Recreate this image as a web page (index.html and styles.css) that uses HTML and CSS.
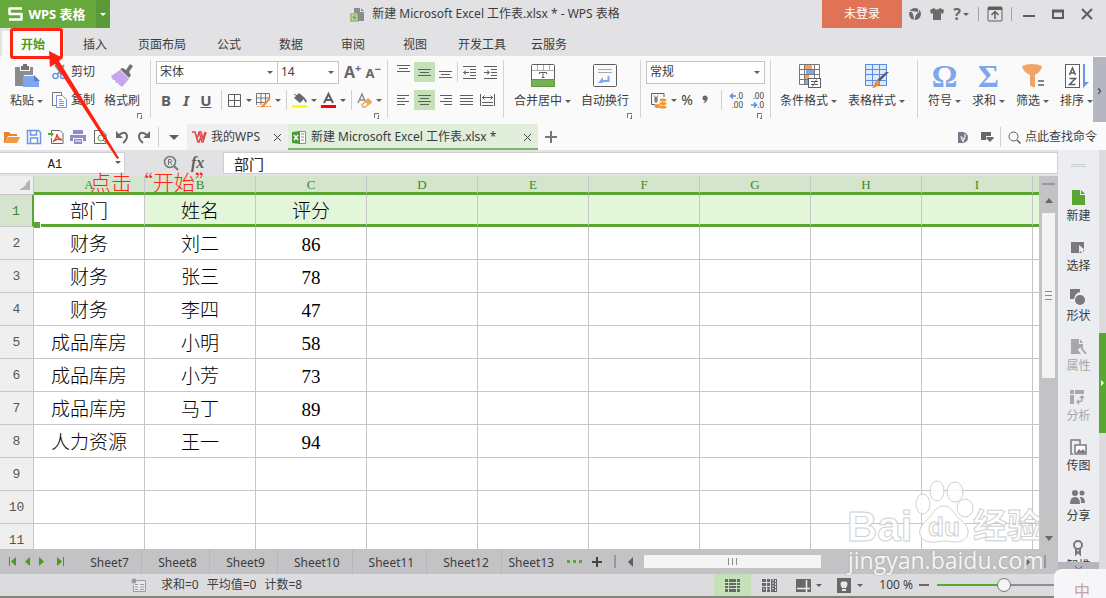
FILE: index.html
```html
<!DOCTYPE html>
<html lang="zh-CN">
<head>
    <meta charset="UTF-8">
    <meta name="viewport" content="width=device-width, initial-scale=1.0">
    <title>新建 Microsoft Excel 工作表.xlsx * - WPS 表格</title>
    <link rel="stylesheet" href="styles.css">
</head>
<body>
    <header class="titlebar">
        <button class="brand">
            <svg width="15" height="14" viewBox="0 0 15 14"><path d="M14 1.500H1.500V7H13.500V12.500H1" fill="none" stroke="#fff" stroke-width="2.500" stroke-linejoin="round"/></svg>
            WPS 表格
        </button>
        <button class="brand-menu" aria-label="菜单"><span class="caret"></span></button>
        <div class="title">
            <svg width="15" height="15" viewBox="0 0 15 15"><path d="M4 1h6v4h4v9H8V6H4z" fill="#8c8c8e"/><path d="M11 1l3 3h-3z" fill="#8c8c8e"/><rect x="1" y="7" width="7" height="7" fill="#e2e2e4" stroke="#5aa632"/><path d="M6.500 9H3v1.500h3V12H2.500" fill="none" stroke="#5aa632"/></svg>
            <span>新建 Microsoft Excel 工作表.xlsx * - WPS 表格</span>
        </div>
        <button class="login">未登录</button>
        <div class="window-tools">
            <button aria-label="云"><svg width="14" height="14" viewBox="0 0 14 14"><circle cx="7" cy="7" r="6" fill="#6b6b6d"/><path d="M4 4l6 1-4 6z" fill="#e2e2e4"/><path d="M1 4l4 1M11 2l-1 4M6 13l1-4" stroke="#e2e2e4"/></svg></button>
            <button aria-label="皮肤"><svg width="14" height="14" viewBox="0 0 14 14"><path d="M4 1Q7 4 10 1l4 2-1 4-2-1v7H3V6L1 7 0 3z" fill="#6b6b6d"/></svg></button>
            <button class="help" aria-label="帮助">?<span class="caret"></span></button>
            <i class="bar"></i>
            <button aria-label="隐藏功能区"><svg width="16" height="16" viewBox="0 0 16 16"><rect x="1" y="1" width="14" height="14" rx="1" fill="none" stroke="#5e5e60"/><path d="M1 2.500h14" stroke="#5e5e60" stroke-width="3"/><path d="M8 13V6M4.500 9L8 5.500 11.500 9" fill="none" stroke="#5e5e60" stroke-width="1.500"/></svg></button>
            <i class="bar"></i>
            <button class="win" aria-label="最小化"><svg width="12" height="12" viewBox="0 0 12 12"><path d="M0 8h12" stroke="#5e5e60" stroke-width="2"/></svg></button>
            <button class="win" aria-label="最大化"><svg width="12" height="12" viewBox="0 0 12 12"><path d="M1 3v7h10V3z" fill="none" stroke="#5e5e60" stroke-width="2"/><path d="M0 3h12" stroke="#5e5e60" stroke-width="3"/></svg></button>
            <button class="win" aria-label="关闭"><svg width="12" height="12" viewBox="0 0 12 12"><path d="M1 1l10 10M11 1L1 11" stroke="#5e5e60" stroke-width="2"/></svg></button>
        </div>
    </header>

    <nav class="menu">
        <a href="#" class="active">开始</a>
        <a href="#">插入</a>
        <a href="#">页面布局</a>
        <a href="#">公式</a>
        <a href="#">数据</a>
        <a href="#">审阅</a>
        <a href="#">视图</a>
        <a href="#">开发工具</a>
        <a href="#">云服务</a>
    </nav>

    <section class="ribbon">
        <div class="group clipboard">
            <button class="big">
                <svg width="26" height="26" viewBox="0 0 26 26"><path d="M1 4h5v4h10V4h3v8h-9v11H1z" fill="#8c8c8e"/><path d="M7 3h2V1h4v2h2v4H7z" fill="#737375"/><path d="M9 13h11l5 5v6H9z" fill="#7fa5ee"/><path d="M20 12v6h6z" fill="#4f7fd8"/></svg>
                <span>粘贴<i class="caret"></i></span>
            </button>
            <div class="pair">
                <button><svg width="15" height="16" viewBox="0 0 15 16"><path d="M3 1l7 10M12 1L6 10" stroke="#8c8c8e" stroke-width="2"/><circle cx="3.500" cy="12" r="2.500" fill="none" stroke="#6d95e3" stroke-width="1.500"/><circle cx="11" cy="12" r="2.500" fill="none" stroke="#6d95e3" stroke-width="1.500"/></svg>剪切</button>
                <button><svg width="15" height="16" viewBox="0 0 15 16"><path d="M4 13.500H.5v-13h9V3" fill="none" stroke="#77777a"/><path d="M4.500 3.500h6l4 4v8h-10z" fill="#fff" stroke="#6d95e3"/><path d="M7 7.500h3M7 9.500h5M7 11.500h5M7 13.500h5" stroke="#6d95e3"/></svg>复制</button>
            </div>
            <button class="big">
                <svg width="26" height="26" viewBox="0 0 26 26"><path d="M2 13l9-6 9 9-7 8q-2-2-3-2l-1-2-2 0-1-3-2 0z" fill="#c9a4f2"/><path d="M11 6l3-1 3 2 4-6 3 2-4 6 2 3-2 3z" fill="#737375"/></svg>
                <span>格式刷</span>
            </button>
            <button class="launcher" aria-label="剪贴板"></button>
        </div>

        <div class="group font">
            <div class="row">
                <label class="pick family"><select aria-label="字体"><option>宋体</option></select></label>
                <label class="pick size"><select aria-label="字号"><option>14</option></select></label>
                <button class="grow">A<sup>+</sup></button>
                <button class="shrink">A<sup>−</sup></button>
            </div>
            <div class="row tools">
                <button class="letter"><b>B</b></button>
                <button class="letter"><b><em>I</em></b></button>
                <button class="letter"><b><u>U</u></b></button>
                <i class="bar"></i>
                <button class="drop" aria-label="边框"><svg width="15" height="15" viewBox="0 0 15 15"><path d="M1.500 1.500h12v12h-12zM7.500 1v13M1 7.500h13" fill="none" stroke="#5e5e60"/></svg><i class="caret"></i></button>
                <button class="drop" aria-label="绘图边框"><svg width="15" height="15" viewBox="0 0 15 15"><path d="M.5 12V.5h13V5M5 1v11M9.500 1v8M1 5h12M1 9.500h8" fill="none" stroke="#77777a"/><path d="M14 5l-6 7-2 2" stroke="#ec8c3c" stroke-width="2"/><path d="M1 13.500h14" stroke="#ec8c3c" stroke-dasharray="2 1"/></svg><i class="caret"></i></button>
                <i class="bar"></i>
                <button class="drop" aria-label="填充颜色"><svg width="15" height="15" viewBox="0 0 15 15"><path d="M4 3l3-3 6 5-5 5-6-5zM12 5q4 2 2 5l-2-3z" fill="#68686a"/><path d="M2 1l5 3" stroke="#68686a"/><path d="M0 12h15v3H0z" fill="#ff0"/></svg><i class="caret"></i></button>
                <button class="drop" aria-label="字体颜色"><svg width="15" height="15" viewBox="0 0 15 15"><path d="M3 10L7.500 1 12 10M4.500 7h6" fill="none" stroke="#5e5e60" stroke-width="2"/><path d="M0 12h15v3H0z" fill="#f00"/></svg><i class="caret"></i></button>
                <i class="bar"></i>
                <button class="drop" aria-label="清除"><svg width="15" height="15" viewBox="0 0 15 15"><path d="M1 10L5 1l3 7M3 7h4" fill="none" stroke="#8c8c8e" stroke-width="1.500"/><path d="M5 12l6-6 3 3-6 5H6z" fill="#fff" stroke="#eda35c" stroke-width="1.500"/><path d="M8 9l4 3 3-3-3-3z" fill="#eda35c"/></svg><i class="caret"></i></button>
            </div>
            <button class="launcher" aria-label="字体设置"></button>
        </div>

        <div class="group align">
            <div class="row">
                <button aria-label="顶端对齐"><svg width="15" height="15" viewBox="0 0 15 15"><path d="M1 .5h13M3 3.500h9M1 6.500h13" stroke="#5e5e60"/></svg></button>
                <button class="on" aria-label="垂直居中"><svg width="15" height="15" viewBox="0 0 15 15"><path d="M1 4.500h13M3 7.500h9M1 10.500h13" stroke="#5e5e60"/></svg></button>
                <button aria-label="底端对齐"><svg width="15" height="15" viewBox="0 0 15 15"><path d="M1 6.500h13M3 9.500h9M1 12.500h13" stroke="#5e5e60"/></svg></button>
                <i class="bar"></i>
                <button aria-label="减少缩进"><svg width="15" height="15" viewBox="0 0 15 15"><path d="M1 1.500h13M8 4.500h6M8 7.500h6M8 10.500h6M1 13.500h13M2 7.500h5M4 5.500l-2.500 2L4 9.500" fill="none" stroke="#5e5e60"/></svg></button>
                <button aria-label="增加缩进"><svg width="15" height="15" viewBox="0 0 15 15"><path d="M1 1.500h13M8 4.500h6M8 7.500h6M8 10.500h6M1 13.500h13M1 7.500h5M4 5.500l2.500 2L4 9.500" fill="none" stroke="#5e5e60"/></svg></button>
            </div>
            <div class="row">
                <button aria-label="左对齐"><svg width="15" height="15" viewBox="0 0 15 15"><path d="M1 2.500h12M1 5.500h8M1 8.500h12M1 11.500h8" stroke="#5e5e60"/></svg></button>
                <button class="on" aria-label="水平居中"><svg width="15" height="15" viewBox="0 0 15 15"><path d="M1 2.500h13M3 5.500h9M1 8.500h13M3 11.500h9" stroke="#5e5e60"/></svg></button>
                <button aria-label="右对齐"><svg width="15" height="15" viewBox="0 0 15 15"><path d="M2 2.500h12M6 5.500h8M2 8.500h12M6 11.500h8" stroke="#5e5e60"/></svg></button>
                <button aria-label="两端对齐"><svg width="15" height="15" viewBox="0 0 15 15"><path d="M1 2.500h13M1 5.500h13M1 8.500h13M1 11.500h13" stroke="#5e5e60"/></svg></button>
                <button aria-label="分散对齐"><svg width="15" height="15" viewBox="0 0 15 15"><path d="M.5 1v12M14.500 1v12M2 4.500h11M4.500 2.500l-2 2 2 2M10.500 2.500l2 2-2 2M2 9.500h11M2 12.500h11" fill="none" stroke="#5e5e60"/></svg></button>
            </div>
        </div>

        <div class="group merge">
            <button class="big">
                <svg width="26" height="26" viewBox="0 0 26 26"><rect x="1.500" y="1.500" width="23" height="22" rx="1" fill="#fff" stroke="#5e5e60"/><path d="M7.500 2v5M13.500 2v5M19.500 2v5M2 7.500h22" stroke="#aaa"/><path d="M1.500 16.500h23v7h-23z" fill="#78b057" stroke="#5c9a3a"/><path d="M9.500 11V9.500h7V11M13 9.500V14M11.500 14.500h3" fill="none" stroke="#5e5e60"/></svg>
                <span>合并居中<i class="caret"></i></span>
            </button>
            <button class="big">
                <svg width="26" height="26" viewBox="0 0 26 26"><rect x="1.500" y="1.500" width="23" height="22" rx="1" fill="#fafafa" stroke="#5e5e60"/><path d="M6 6.500h14M6 9.500h14" stroke="#aaa"/><path d="M16.500 13v5H9" fill="none" stroke="#7fa5ee" stroke-width="2"/><path d="M11 14v6H6z" fill="#7fa5ee"/></svg>
                <span>自动换行</span>
            </button>
            <button class="launcher" aria-label="对齐设置"></button>
        </div>

        <div class="group number">
            <div class="row">
                <label class="pick format"><select aria-label="数字格式"><option>常规</option></select></label>
            </div>
            <div class="row tools">
                <button class="drop" aria-label="货币"><svg width="17" height="17" viewBox="0 0 17 17"><path d="M14 5V1.500H1.500v11H5" fill="none" stroke="#5e5e60"/><path d="M4 3.500l2 3 2-3M4 7h4M4 9h4M6 6v5" fill="none" stroke="#5e5e60"/><ellipse cx="13" cy="8" rx="3.500" ry="1.500" fill="#f0962e"/><ellipse cx="13" cy="11.500" rx="3.500" ry="1.500" fill="#f0962e"/><ellipse cx="13" cy="15" rx="3.500" ry="1.500" fill="#f0962e"/><ellipse cx="7.500" cy="14" rx="3" ry="2" fill="#f0962e"/></svg><i class="caret"></i></button>
                <button class="percent">%</button>
                <button class="comma" aria-label="千位分隔"><svg width="8" height="12" viewBox="0 0 8 12"><circle cx="4" cy="4" r="2.500" fill="#68686a"/><path d="M6.500 4Q6.500 8 3 9l-.5-1Q5 7 4 5z" fill="#68686a"/></svg></button>
                <i class="bar"></i>
                <button class="digits" aria-label="增加小数位"><span><svg width="6" height="6" viewBox="0 0 6 6"><path d="M0 3h6M3 .5L.5 3 3 5.500" fill="none" stroke="#5c8be0" stroke-width="1.500"/></svg>.0</span><span>.00</span></button>
                <button class="digits" aria-label="减少小数位"><span>.00</span><span><svg width="6" height="6" viewBox="0 0 6 6"><path d="M0 3h6M3 .5L5.500 3 3 5.500" fill="none" stroke="#5c8be0" stroke-width="1.500"/></svg>.0</span></button>
            </div>
            <button class="launcher" aria-label="数字设置"></button>
        </div>

        <div class="group style">
            <button class="big">
                <svg width="26" height="26" viewBox="0 0 26 26"><path d="M3.500 1.500h20v20h-20z" fill="#fff"/><path d="M9 2h7v5H9zM9 12h4v5H9z" fill="#f4a258"/><path d="M10 7h8v5h-8zM9 17h3v4H9z" fill="#7fa5ee"/><path d="M3.500 1.500h20v20h-20zM8.500 2v20M18.500 2v13M4 6.500h20M4 11.500h20M4 16.500h9" fill="none" stroke="#77777a"/><rect x="12.500" y="15.500" width="12" height="9" fill="#fff" stroke="#5e5e60"/><path d="M15 18.500h7M15 21.500h7M20.500 16.500l-4 7" stroke="#5e5e60"/></svg>
                <span>条件格式<i class="caret"></i></span>
            </button>
            <button class="big">
                <svg width="26" height="26" viewBox="0 0 26 26"><rect x="1.500" y="1.500" width="21" height="21" fill="#dce8fb" stroke="#5c8be0"/><path d="M8.500 2v21M15.500 2v21M2 6.500h20M2 11.500h20M2 17.500h20" stroke="#5c8be0"/><path d="M25 9l-9 9-3-1 9-8z" fill="#5e5e60"/><path d="M14 17l2 3q-3 5-8 5 3-3 3-6z" fill="#ec8c3c"/></svg>
                <span>表格样式<i class="caret"></i></span>
            </button>
        </div>

        <div class="group edit">
            <button class="big">
                <i class="sign">Ω</i>
                <span>符号<i class="caret"></i></span>
            </button>
            <button class="big">
                <i class="sign">Σ</i>
                <span>求和<i class="caret"></i></span>
            </button>
            <button class="big">
                <svg width="26" height="26" viewBox="0 0 26 26"><path d="M2 3q10-4 20 0-1 6-7 9v12q-3 1-5-2V12Q3 9 2 3z" fill="#f0a468"/><path d="M18 18h6M18 22h6" stroke="#5e5e60" stroke-width="1.500"/></svg>
                <span>筛选<i class="caret"></i></span>
            </button>
            <button class="big">
                <svg width="26" height="26" viewBox="0 0 26 26"><rect x="1.500" y="1.500" width="14" height="23" fill="#fff" stroke="#5e5e60"/><path d="M5.500 12L8.500 5l3 7M6.500 10h4M5.500 15.500h6l-6 6h6" fill="none" stroke="#5e5e60" stroke-width="1.500"/><path d="M19 1h2v18h4l-6 6z" fill="#6d95e3"/></svg>
                <span>排序<i class="caret"></i></span>
            </button>
        </div>
        <button class="more" aria-label="更多">›</button>
    </section>

    <section class="docbar">
        <div class="quick">
            <button aria-label="打开"><svg width="16" height="16" viewBox="0 0 16 16"><path d="M0 3h5l2 2h6v2H4l-3 7H0z" fill="#e8842c"/><path d="M4 8h12l-3 6H1z" fill="#f09a42"/></svg></button>
            <button aria-label="保存"><svg width="16" height="16" viewBox="0 0 16 16"><path d="M1.500 1.500h11l2 2v11h-13zM4.500 2v4h6V2M4.500 14V9h7v5" fill="#fff" stroke="#6d95e3" stroke-width="1.500"/></svg></button>
            <button aria-label="输出为PDF"><svg width="16" height="16" viewBox="0 0 16 16"><path d="M3.500 7V1.500H12l3 3v10H3.500V9" fill="#fff" stroke="#68686a"/><path d="M0 4h3V2l3 3-3 3V6H0z" fill="#5aa632"/><path d="M9 5q0 4-4 8M9 5q0 4 5 6Q9 9 6 12" fill="none" stroke="#e8442c" stroke-width="1.500"/></svg></button>
            <button aria-label="打印"><svg width="16" height="16" viewBox="0 0 16 16"><path d="M3 1h10v4H3zM0 6h16v6h-3V9H3v3H0zM4 10h8v5H4z" fill="#8f8ccb"/><path d="M5 12h6" stroke="#fff"/></svg></button>
            <button aria-label="打印预览"><svg width="16" height="16" viewBox="0 0 16 16"><path d="M2.500 14.500v-13H10l4 4v9zM10 2v4h4" fill="#fff" stroke="#68686a"/><circle cx="9" cy="9" r="3" fill="none" stroke="#5aa632"/><path d="M11 11l3 3" stroke="#5aa632"/></svg></button>
            <button aria-label="撤销"><svg width="16" height="16" viewBox="0 0 16 16"><path d="M5 6Q12 1 13 7 13 11 9 14" fill="none" stroke="#68686a" stroke-width="2"/><path d="M2 2v7h7z" fill="#68686a"/></svg></button>
            <button aria-label="恢复"><svg width="16" height="16" viewBox="0 0 16 16"><path d="M11 6Q4 1 3 7 3 11 7 14" fill="none" stroke="#68686a" stroke-width="2"/><path d="M14 2v7H7z" fill="#68686a"/></svg></button>
            <i class="bar"></i>
            <button aria-label="自定义"><i class="caret wide"></i></button>
        </div>
        <div class="doc">
            <svg width="16" height="14" viewBox="0 0 16 14"><path d="M1 2h3l2 7 2-7h2l2 7 2-7M4 2l3 10h1l2-6M8 2l3 10h1l3-10" fill="none" stroke="#e5464b" stroke-width="1.500"/></svg>
            <span>我的WPS</span>
            <button class="close" aria-label="关闭标签"><svg width="9" height="9" viewBox="0 0 9 9"><path d="M1 1l7 7M8 1L1 8" stroke="#444"/></svg></button>
        </div>
        <div class="doc current">
            <svg width="15" height="15" viewBox="0 0 15 15"><path d="M6 1.500h7.500v12H6" fill="#fff" stroke="#8c8c8e"/><path d="M9 4h3M9 7h3M9 10h3" stroke="#8c8c8e"/><path d="M0 2l8-1v13l-8-1z" fill="#4f9a3a"/><path d="M2 5l4 5M6 5l-4 5" stroke="#fff" stroke-width="1.500"/></svg>
            <span>新建 Microsoft Excel 工作表.xlsx *</span>
            <button class="close" aria-label="关闭标签"><svg width="9" height="9" viewBox="0 0 9 9"><path d="M1 1l7 7M8 1L1 8" stroke="#444"/></svg></button>
        </div>
        <button class="new-doc" aria-label="新建标签"><svg width="12" height="12" viewBox="0 0 12 12"><path d="M6 0v12M0 6h12" stroke="#77777a" stroke-width="2"/></svg></button>
        <div class="find">
            <button aria-label="文档"><svg width="10" height="11" viewBox="0 0 10 11"><path d="M0 0h5q5 1 5 5.500T5 11H0z" fill="#77798a"/><path d="M5 10V5M3 4q0 3 2 5M7 2q1 4-2 7" fill="none" stroke="#fff"/></svg></button>
            <button aria-label="窗口"><svg width="13" height="12" viewBox="0 0 13 12"><path d="M0 1h10v4H5v4H0z" fill="#68686a"/><path d="M6 6h6l1 1-4 4-4-4z" fill="#68686a"/></svg></button>
            <i class="bar"></i>
            <button class="command"><svg width="13" height="13" viewBox="0 0 13 13"><circle cx="5.500" cy="5.500" r="4.500" fill="none" stroke="#5e5e60"/><path d="M9 9l3.500 3.500" stroke="#5e5e60" stroke-width="1.500"/></svg>点此查找命令</button>
        </div>
    </section>

    <main class="main">
        <div class="workspace">
            <div class="formula">
                <label class="namebox"><input type="text" value="A1" aria-label="名称框"></label>
                <div class="fx">
                    <svg width="16" height="16" viewBox="0 0 16 16"><circle cx="7" cy="7" r="5.500" fill="none" stroke="#77777a" stroke-width="1.500"/><path d="M11 11l4 4" stroke="#77777a" stroke-width="2"/><path d="M5.500 10V4.500H8q1.500 1.200 0 2.500H5.500M7 7l2 3" fill="none" stroke="#77777a"/></svg>
                    <em>fx</em>
                </div>
                <input class="content" type="text" value="部门" aria-label="编辑栏">
            </div>

            <div class="sheet">
                <div class="grid">
                    <table>
                        <colgroup><col class="head"><col span="9" class="cell"><col class="cell"></colgroup>
                        <thead>
                            <tr><th class="corner"></th><th>A</th><th>B</th><th>C</th><th>D</th><th>E</th><th>F</th><th>G</th><th>H</th><th>I</th><th></th></tr>
                        </thead>
                        <tbody>
                            <tr class="selected"><th>1</th><td class="cursor">部门</td><td>姓名</td><td>评分</td><td></td><td></td><td></td><td></td><td></td><td></td><td></td></tr>
                            <tr><th>2</th><td>财务</td><td>刘二</td><td>86</td><td></td><td></td><td></td><td></td><td></td><td></td><td></td></tr>
                            <tr><th>3</th><td>财务</td><td>张三</td><td>78</td><td></td><td></td><td></td><td></td><td></td><td></td><td></td></tr>
                            <tr><th>4</th><td>财务</td><td>李四</td><td>47</td><td></td><td></td><td></td><td></td><td></td><td></td><td></td></tr>
                            <tr><th>5</th><td>成品库房</td><td>小明</td><td>58</td><td></td><td></td><td></td><td></td><td></td><td></td><td></td></tr>
                            <tr><th>6</th><td>成品库房</td><td>小芳</td><td>73</td><td></td><td></td><td></td><td></td><td></td><td></td><td></td></tr>
                            <tr><th>7</th><td>成品库房</td><td>马丁</td><td>89</td><td></td><td></td><td></td><td></td><td></td><td></td><td></td></tr>
                            <tr><th>8</th><td>人力资源</td><td>王一</td><td>94</td><td></td><td></td><td></td><td></td><td></td><td></td><td></td></tr>
                            <tr><th>9</th><td></td><td></td><td></td><td></td><td></td><td></td><td></td><td></td><td></td><td></td></tr>
                            <tr><th>10</th><td></td><td></td><td></td><td></td><td></td><td></td><td></td><td></td><td></td><td></td></tr>
                            <tr><th>11</th><td></td><td></td><td></td><td></td><td></td><td></td><td></td><td></td><td></td><td></td></tr>
                        </tbody>
                    </table>
                </div>
                <div class="vscroll">
                    <i class="split"></i>
                    <i class="up"></i>
                    <div class="vthumb"><i></i><i></i><i></i></div>
                    <i class="down"></i>
                </div>
            </div>

            <div class="sheetbar">
                <div class="nav">
                    <button aria-label="第一个"><svg width="7" height="9" viewBox="0 0 7 9"><path d="M0 0h1v9H0zM7 0v9L2 4.500z" fill="#4a9c1c"/></svg></button>
                    <button aria-label="上一个"><svg width="5" height="9" viewBox="0 0 5 9"><path d="M5 0v9L0 4.500z" fill="#4a9c1c"/></svg></button>
                    <button aria-label="下一个"><svg width="5" height="9" viewBox="0 0 5 9"><path d="M0 0v9l5-4.500z" fill="#4a9c1c"/></svg></button>
                    <button aria-label="最后一个"><svg width="7" height="9" viewBox="0 0 7 9"><path d="M6 0h1v9H6zM0 0v9l5-4.500z" fill="#4a9c1c"/></svg></button>
                </div>
                <button class="tab">Sheet7</button>
                <button class="tab">Sheet8</button>
                <button class="tab">Sheet9</button>
                <button class="tab">Sheet10</button>
                <button class="tab">Sheet11</button>
                <button class="tab">Sheet12</button>
                <button class="tab last">Sheet13</button>
                <button class="dots" aria-label="更多工作表"><i></i><i></i><i></i></button>
                <button aria-label="新建工作表"><svg width="10" height="10" viewBox="0 0 10 10"><path d="M5 0v10M0 5h10" stroke="#444" stroke-width="2"/></svg></button>
                <i class="split-h"></i>
                <div class="hscroll">
                    <i class="left"></i>
                    <div class="hthumb"><i></i><i></i><i></i></div>
                    <i class="right"></i>
                    <i class="split-h"></i>
                </div>
            </div>
        </div>

        <aside class="sidebar">
            <div class="items">
                <i class="grip"></i>
                <button><svg width="18" height="18" viewBox="0 0 18 18"><path d="M3 2h8v5h5v10H3z" fill="#5aa632"/><path d="M12 2l4 4h-4z" fill="#5aa632"/></svg>新建</button>
                <button><svg width="18" height="18" viewBox="0 0 18 18"><path d="M2 4h13v11H2z" fill="#7a7a7c"/><path d="M10 7v8l2-2 1 3 2-1-1-3h2z" fill="#ebedf0"/></svg>选择</button>
                <button><svg width="18" height="18" viewBox="0 0 18 18"><path d="M1 1h10v3q-5 1-6 7H1z" fill="#7a7a7c"/><circle cx="11" cy="12" r="5" fill="#7a7a7c"/></svg>形状</button>
                <button class="off"><svg width="18" height="18" viewBox="0 0 18 18"><path d="M2 1h8v5h4v4l-3-1-2 3 3 4H2zM11 1l3 4h-3z" fill="#a8a8ab"/><path d="M10 9q3-2 3 2l4 5" fill="none" stroke="#a8a8ab" stroke-width="2"/></svg>属性</button>
                <button class="off"><svg width="18" height="18" viewBox="0 0 18 18"><path d="M1 2h4v4H1zM6 2h9v4H6zM1 7h4v9H1z" fill="#a8a8ab"/><path d="M13 8v4q0 2-5 2M11 10l2-2 2 2M10 12l-2 2 2 2" fill="none" stroke="#a8a8ab" stroke-width="1.500"/></svg>分析</button>
                <button><svg width="18" height="18" viewBox="0 0 18 18"><path d="M4 16H2V2h9v4" fill="none" stroke="#7a7a7c" stroke-width="1.500"/><rect x="6" y="7" width="11" height="9" fill="#fff" stroke="#7a7a7c" stroke-width="1.500"/><path d="M7 15l3-4 2 2 2-2 3 4z" fill="#7a7a7c"/></svg>传图</button>
                <button><svg width="18" height="18" viewBox="0 0 18 18"><circle cx="6" cy="5" r="3" fill="#7a7a7c"/><circle cx="13" cy="5" r="2.500" fill="#7a7a7c"/><path d="M1 16q0-7 5-7t5 7zM11 9q5-1 5 6h-4q0-4-1-6z" fill="#7a7a7c"/></svg>分享</button>
                <button><svg width="18" height="18" viewBox="0 0 18 18"><circle cx="9" cy="7" r="4" fill="none" stroke="#7a7a7c" stroke-width="2"/><path d="M7 11v5l2-2 2 2v-5" fill="none" stroke="#7a7a7c" stroke-width="2"/></svg>智推</button>
            </div>
            <button class="scroll" aria-label="向下"><svg width="9" height="5" viewBox="0 0 9 5"><path d="M1 0l3.500 4L8 0" fill="none" stroke="#5e5e60"/></svg></button>
        </aside>
        <div class="edge"><button aria-label="展开"></button></div>
    </main>

    <footer class="status">
        <svg width="15" height="15" viewBox="0 0 15 15"><path d="M6 2.500h8.500v11h-12V7" fill="#e8e8ea" stroke="#9a9a9c"/><circle cx="3" cy="3" r="2.500" fill="#9a9a9c"/><path d="M4 6.500h3M9 6.500h4M4 9h3M9 9h4M4 11.500h3M9 11.500h4" stroke="#9a9a9c"/></svg>
        <span class="sums"><span>求和=0</span><span>平均值=0</span><span>计数=8</span></span>
        <div class="views">
            <button class="on" aria-label="普通视图"><svg width="15" height="15" viewBox="0 0 15 15"><path d="M0 1h15v13H0z" fill="#68686a"/><path d="M3.500 1v13M11.500 1v13M0 4.500h15M0 7.500h15M0 10.500h15" stroke="#c5e1b8"/></svg></button>
            <button aria-label="分页预览"><svg width="15" height="15" viewBox="0 0 15 15"><path d="M0 1h15v13H0z" fill="#68686a"/><path d="M4.500 1v13M8.500 1v13M0 4.500h9M0 8.500h9" stroke="#dcdcde"/><path d="M11 1v10H0M13.500 2v12" fill="none" stroke="#dcdcde" stroke-dasharray="2 1"/></svg></button>
            <button aria-label="冻结窗格"><svg width="15" height="15" viewBox="0 0 15 15"><path d="M0 1h15v13H0z" fill="#68686a"/><path d="M10.500 2v12M1 10.500h13" stroke="#eee" stroke-width="1.500"/></svg><i class="caret"></i></button>
            <button aria-label="护眼模式"><svg width="15" height="15" viewBox="0 0 15 15"><path d="M0 0h14v15H0z" fill="#68686a"/><path d="M5 10Q2 5 5 3.500h4Q12 5 9 10zM5 11h4v2H5z" fill="#e8e8ea"/></svg><i class="caret"></i></button>
        </div>
        <label class="zoom" for="zoom">100 %</label>
        <button class="minus" aria-label="缩小"></button>
        <input type="range" id="zoom" min="0" max="100" value="44">
    </footer>

    <!-- 操作步骤标注 -->
    <div class="mark-box"></div>
    <svg class="mark-arrow" width="72" height="114" viewBox="0 0 72 114"><path d="M1 2l14 7-4 3 60 97-2 1L7 15l-5 3z" fill="#ff2111"/></svg>
    <p class="mark-text">点击“开始”</p>

    <div class="watermark">
        <svg width="200" height="66" viewBox="0 0 200 66">
            <g fill="#fff" stroke="#c9c9cb">
                <ellipse cx="77" cy="24" rx="7" ry="10"/>
                <ellipse cx="91" cy="11" rx="7" ry="10"/>
                <ellipse cx="109" cy="12" rx="8" ry="10"/>
                <ellipse cx="119" cy="28" rx="8" ry="9"/>
                <path d="M98 26c8 0 10 9 18 15 10 8 7 20-5 21-5 0-8-1-13-1s-9 2-14 1c-13-2-13-14-4-21 7-6 9-15 18-15z"/>
            </g>
            <text x="1" y="61" class="wm-big">Bai</text>
            <text x="82" y="56" class="wm-du">du</text>
            <text x="127" y="58" class="wm-cn">经验</text>
        </svg>
        <span>jingyan.baidu.com</span>
    </div>
    <div class="ime">中</div>
</body>
</html>
```
FILE: styles.css
```css
* {
    box-sizing: border-box;
}
body {
    font-family: "Noto Sans", "Noto Sans CJK SC", sans-serif;
    font-size: 12px;
    line-height: 16px;
    margin: 0;
    color: #3c3c3e;
    background: #fafafa;
    height: 100vh;
    display: flex;
    flex-direction: column;
    overflow: hidden;
    position: relative;
}
button {
    font: inherit;
    color: inherit;
    background: none;
    border: none;
    padding: 0;
    display: flex;
    align-items: center;
    justify-content: center;
    flex-shrink: 0;
    white-space: nowrap;
}
svg {
    display: block;
    flex-shrink: 0;
    overflow: visible;
}
.caret {
    display: inline-block;
    border: 3px solid transparent;
    border-top-color: #5e5e60;
    border-bottom: 0;
    flex-shrink: 0;
}
.caret.wide {
    border-width: 5px;
    border-bottom: 0;
}
.bar {
    width: 1px;
    height: 20px;
    background: #cfcfd2;
    flex-shrink: 0;
}

/* title bar */
.titlebar {
    display: flex;
    align-items: center;
    height: 28px;
    flex-shrink: 0;
    background: #e2e2e4;
}
.brand {
    width: 96px;
    height: 28px;
    gap: 5px;
    padding-right: 2px;
    background: #67a93d;
    color: #fff;
    font-size: 13px;
    font-weight: bold;
}
.brand-menu {
    width: 14px;
    height: 28px;
    background: #5b9939;
}
.brand-menu .caret {
    border-top-color: #fff;
}
.title {
    flex: 1;
    display: flex;
    justify-content: center;
    align-items: center;
    gap: 7px;
    padding-left: 38px;
}
.login {
    width: 80px;
    height: 28px;
    background: #e07355;
    color: #fff;
}
.window-tools {
    display: flex;
    align-items: center;
    gap: 8px;
    padding: 0 10px 0 6px;
}
.window-tools .bar {
    height: 14px;
    background: #a5a5a8;
}
.help {
    width: 18px;
    font-size: 16px;
    font-weight: bold;
    color: #6b6b6d;
    gap: 2px;
}
.win {
    width: 18px;
    margin-right: 3px;
}
.win:last-child {
    margin-right: 0;
}

/* menu tabs */
.menu {
    display: flex;
    height: 28px;
    flex-shrink: 0;
    padding: 3px 2px 0;
    background: #e2e2e4;
}
.menu a {
    min-width: 62px;
    padding: 0 12px;
    line-height: 27px;
    text-align: center;
    color: #3c3c3e;
    text-decoration: none;
}
.menu .active {
    background: #fafafa;
    color: #4a9c1c;
    font-weight: bold;
}

/* ribbon */
.ribbon {
    display: flex;
    height: 67px;
    flex-shrink: 0;
    overflow: hidden;
    position: relative;
}
.group {
    position: relative;
    display: flex;
    flex-shrink: 0;
    margin: 4px 0 5px;
    border-right: 1px solid #d4d4d7;
}
.big {
    flex-direction: column;
    justify-content: flex-start;
    padding-top: 3px;
    gap: 4px;
    height: 50px;
}
.big span {
    display: flex;
    align-items: center;
    gap: 3px;
    line-height: 16px;
}
.sign {
    height: 26px;
    font: bold 32px/26px "Liberation Serif", serif;
    color: #7fa5ee;
}
.launcher {
    position: absolute;
    right: 8px;
    bottom: 0;
    width: 5px;
    height: 5px;
    border: solid #77777a;
    border-width: 1px 0 0 1px;
}
.launcher::after {
    content: "";
    width: 3px;
    height: 3px;
    border: solid #77777a;
    border-width: 0 1px 1px 0;
    margin: 2px 0 0 2px;
}
.clipboard {
    width: 151px;
    padding-left: 10px;
    gap: 9px;
}
.pair {
    display: flex;
    flex-direction: column;
    gap: 12px;
    padding-top: 4px;
}
.pair button {
    gap: 4px;
}
.clipboard .big:nth-of-type(2) {
    margin-right: 0;
}
.font,
.number,
.align {
    flex-direction: column;
    gap: 4px;
}
.row {
    display: flex;
    align-items: center;
    height: 24px;
}
.font {
    width: 237px;
    padding-left: 5px;
}
.pick {
    position: relative;
    height: 23px;
    border: 1px solid #c4c4c7;
    background: #fff;
}
.pick::after,
.namebox::after {
    content: "";
    position: absolute;
    right: 4px;
    top: 9px;
    border: 3px solid transparent;
    border-top-color: #5e5e60;
    border-bottom: 0;
}
.pick select {
    appearance: none;
    width: 100%;
    height: 21px;
    border: none;
    background: none;
    padding: 0 3px;
    font: inherit;
    color: #3c3c3e;
}
.family {
    width: 122px;
}
.size {
    width: 61px;
    border-left: none;
}
.grow,
.shrink {
    font-weight: bold;
    font-size: 16px;
    color: #68686a;
    margin-left: 5px;
}
.shrink {
    font-size: 13px;
    margin-left: 4px;
    padding-top: 2px;
}
.row sup {
    font-size: 11px;
    line-height: 8px;
    align-self: flex-start;
}
.tools .bar {
    margin: 0 5px;
}
.letter {
    width: 20px;
    font-size: 15px;
    color: #5e5e60;
}
.drop {
    gap: 4px;
    width: 30px;
    justify-content: flex-start;
}
.font .drop {
    width: 29px;
}
.font .drop:has(+ .bar) {
    width: 25px;
}
.align {
    width: 116px;
    padding-left: 5px;
}
.align .row button {
    width: 21px;
    height: 20px;
}
.align .bar {
    margin: 0 1px;
}
.on {
    background: #c5e1b8;
}
.merge {
    width: 137px;
    padding-left: 10px;
    gap: 10px;
}
.number {
    width: 130px;
    padding-left: 5px;
}
.format {
    width: 119px;
}
.number .tools {
    padding-left: 4px;
}
.percent {
    width: 14px;
    font-size: 14px;
}
.comma {
    width: 22px;
}
.digits {
    flex-direction: column;
    align-items: flex-end;
    width: 16px;
    margin-right: 5px;
    font-size: 8px;
    line-height: 9px;
}
.digits span {
    display: flex;
    align-items: center;
}
.style {
    width: 147px;
    padding-left: 9px;
    gap: 11px;
}
.edit {
    padding-left: 10px;
    gap: 11px;
    border-right: none;
}
.more {
    position: absolute;
    right: 0;
    top: 1px;
    width: 13px;
    height: 65px;
    background: #b4b6c0;
    font-size: 14px;
}

/* quick access and document tabs */
.docbar {
    display: flex;
    height: 27px;
    flex-shrink: 0;
    padding-top: 1px;
}
.quick {
    display: flex;
    align-items: center;
    gap: 6px;
    width: 187px;
    padding-left: 4px;
}
.quick .caret {
    margin-left: 4px;
}
.doc {
    display: flex;
    align-items: center;
    width: 101px;
    padding: 0 6px 0 4px;
    gap: 4px;
    background: #efeff0;
}
.doc .close {
    margin-left: auto;
}
.current {
    width: 250px;
    padding-top: 2px;
    background: #e1eedb;
    border-bottom: 2px solid #82b36b;
}
.new-doc {
    width: 26px;
}
.find {
    display: flex;
    align-items: center;
    gap: 13px;
    margin-left: auto;
    padding-right: 9px;
}
.find .bar {
    margin: 0 -7px;
}
.command {
    gap: 4px;
    padding-left: 1px;
}

/* workspace */
.main {
    flex: 1;
    min-height: 0;
    display: flex;
}
.workspace {
    flex: 1;
    min-width: 0;
    display: flex;
    flex-direction: column;
}
.formula {
    display: flex;
    height: 26px;
    flex-shrink: 0;
    padding: 2px 0;
    background: #e2e2e4;
}
.formula input {
    border: 1px solid #d0d0d3;
    background: #fff;
    color: #222;
}
.namebox {
    position: relative;
    width: 125px;
}
.namebox input {
    width: 100%;
    height: 22px;
    padding: 3px 14px 0 0;
    text-align: center;
    border-left: none;
    font-family: "Liberation Mono", monospace;
    font-size: 12px;
}
.fx {
    display: flex;
    align-items: center;
    gap: 12px;
    width: 98px;
    padding-left: 38px;
}
.fx em {
    font: italic bold 16px "Liberation Serif", serif;
    color: #5e5e60;
}
.content {
    flex: 1;
    min-width: 0;
    padding: 0 10px;
    font-family: "Liberation Serif", "Noto Sans CJK SC", serif;
    font-size: 15px;
}
.sheet {
    flex: 1;
    min-height: 0;
    display: flex;
}
.grid {
    flex: 1;
    min-width: 0;
    overflow: hidden;
    background: #fff;
}
table {
    width: 1144px;
    table-layout: fixed;
    border-collapse: separate;
    border-spacing: 0;
}
.head {
    width: 34px;
}
.cell {
    width: 111px;
}
th,
td {
    height: 33px;
    padding: 2px 0 0;
    text-align: center;
    border: solid #c6c6c8;
    border-width: 0 1px 1px 0;
}
td {
    padding-top: 4px;
    font: 300 19px/24px "Liberation Serif", "Noto Sans CJK SC", serif;
    color: #000;
}
th {
    font: 13px/16px "Liberation Mono", monospace;
    color: #555;
    background: #efeff0;
}
thead th {
    height: 19px;
    line-height: 14px;
    font-family: "Liberation Serif", serif;
    background: #d5e5cd;
    color: #3f8a1c;
    border-bottom: 3px solid #5aa632;
}
thead .corner {
    background: linear-gradient(135deg, transparent 50%, #b4b4b8 50%) 20px 4px / 10px 10px no-repeat #efeff0;
    border-bottom: 1px solid #c6c6c8;
}
.selected th,
.selected td {
    height: 32px;
}
.selected th {
    background: #d5e5cd;
    color: #3f8a1c;
    border-right: 2px solid #5aa632;
}
.selected td {
    background: #e3f6d9;
    border-bottom: 3px solid #5aa632;
}
.selected .cursor {
    position: relative;
    background: #fff;
}
.cursor::after {
    content: "";
    position: absolute;
    left: 0;
    bottom: -4px;
    width: 6px;
    height: 6px;
    background: #5aa632;
    border: solid #fff;
    border-width: 1px 1px 0 0;
}
.vscroll {
    width: 19px;
    display: flex;
    flex-direction: column;
    align-items: center;
    padding: 7px 0 8px;
    background: #c3c3c5;
}
.split {
    width: 13px;
    height: 2px;
    background: #99999c;
}
.up,
.down {
    border: 4px solid transparent;
    border-bottom: 5px solid #68686a;
    border-top: 0;
    margin: 13px 0 10px;
}
.down {
    border-top: 5px solid #68686a;
    border-bottom: 0;
    margin: auto 0 0;
}
.vthumb {
    width: 13px;
    height: 165px;
    background: #f2f2f3;
    display: flex;
    flex-direction: column;
    align-items: center;
    justify-content: center;
    gap: 3px;
}
.vthumb i {
    width: 7px;
    height: 1px;
    background: #8c8c8e;
}

/* sheet tabs */
.sheetbar {
    display: flex;
    align-items: center;
    height: 25px;
    flex-shrink: 0;
    background: #c3c3c5;
}
.nav {
    display: flex;
    align-items: center;
    gap: 9px;
    width: 74px;
    padding-left: 9px;
}
.nav button:last-child {
    margin-left: 4px;
}
.tab {
    height: 25px;
    min-width: 68px;
    padding: 2px 12px 0 16px;
    border-right: 1px solid #b8b8bb;
}
.tab.last {
    padding: 2px 12px 0 3px;
    border-right: none;
}
.dots {
    gap: 3px;
    margin: 0 10px 0 -3px;
}
.dots i {
    width: 3px;
    height: 3px;
    background: #5aa632;
}
.split-h {
    width: 2px;
    height: 13px;
    margin: 0 12px;
    background: #99999c;
}
.hscroll {
    flex: 1;
    display: flex;
    align-items: center;
}
.left,
.right {
    border: 5px solid transparent;
    border-right-color: #5e5e60;
    border-left: 0;
    margin-right: 11px;
}
.right {
    border-left: 5px solid #5e5e60;
    border-right: 0;
    margin: 0 2px 0 auto;
}
.hthumb {
    width: 177px;
    height: 13px;
    background: #f4f4f5;
    display: flex;
    align-items: center;
    justify-content: center;
    gap: 3px;
}
.hthumb i {
    width: 1px;
    height: 7px;
    background: #8c8c8e;
}

/* right panel */
.sidebar {
    width: 41px;
    display: flex;
    flex-direction: column;
    background: #ebedf0;
}
.items {
    flex: 1;
    min-height: 0;
    overflow: hidden;
    display: flex;
    flex-direction: column;
    align-items: center;
    padding-top: 14px;
    gap: 12px;
}
.grip {
    width: 15px;
    height: 3px;
    flex-shrink: 0;
    margin-bottom: 8px;
    border: solid #c9ccd6;
    border-width: 1px 0;
}
.items button {
    flex-direction: column;
    height: 38px;
    gap: 2px;
}
.off {
    color: #a8a8ab;
}
.scroll {
    height: 12px;
    background: #b4b6c0;
}
.edge {
    width: 7px;
    display: flex;
    align-items: center;
    background: #dcdcde;
}
.edge button {
    width: 7px;
    height: 100px;
    margin-top: 42px;
    background: #5aa632;
}
.edge button::after {
    content: "";
    border: 3px solid transparent;
    border-left-color: #fff;
    border-right: 0;
}

/* status bar */
.status {
    display: flex;
    align-items: center;
    height: 24px;
    flex-shrink: 0;
    padding-left: 131px;
    background: #dcdcde;
    border-bottom: 2px solid #858380;
}
.sums {
    display: flex;
    gap: 8px;
    padding-left: 15px;
}
.views {
    display: flex;
    margin-left: auto;
}
.views button {
    width: 37px;
    height: 22px;
}
.views button:has(.caret) {
    width: 41px;
    gap: 5px;
}
.zoom {
    padding: 0 6px 0 9px;
}
.minus {
    width: 10px;
    height: 2px;
    background: #68686a;
}
#zoom {
    appearance: none;
    width: 150px;
    height: 14px;
    margin: 0 19px 0 8px;
    background: linear-gradient(90deg, #5aa632 45%, #8c8c94 45%) 0 6px / 100% 2px no-repeat;
}
#zoom::-webkit-slider-thumb {
    appearance: none;
    width: 14px;
    height: 14px;
    border: 1px solid #77777a;
    border-radius: 50%;
    background: #f4f4f5;
}

/* annotations over the window */
.mark-box {
    position: absolute;
    left: 10px;
    top: 28px;
    width: 53px;
    height: 31px;
    border: 3px solid #ff2111;
    border-radius: 3px;
}
.mark-arrow {
    position: absolute;
    left: 48px;
    top: 49px;
}
.mark-text {
    position: absolute;
    left: 90px;
    top: 169px;
    margin: 0;
    font: 300 21px/24px "Noto Sans CJK SC", sans-serif;
    color: #ff2111;
}
.watermark {
    position: absolute;
    right: 60px;
    bottom: 24px;
    width: 200px;
    opacity: 0.85;
}
.watermark text {
    fill: #fff;
    stroke: #c9c9cb;
    stroke-width: 1px;
    font-weight: bold;
}
.wm-big {
    font-family: "Liberation Sans", sans-serif;
    font-size: 42px;
}
.wm-du {
    font-family: "Liberation Sans", sans-serif;
    font-size: 26px;
}
.wm-cn {
    font-family: "Noto Sans CJK SC", sans-serif;
    font-size: 34px;
}
.watermark span {
    display: block;
    padding-left: 2px;
    font: 23px/28px "Open Sans", sans-serif;
    color: #fff;
    text-shadow: 0 0 2px #999;
}
.ime {
    position: absolute;
    right: 0;
    bottom: 0;
    width: 52px;
    height: 29px;
    padding: 12px 0 0 4px;
    overflow: hidden;
    text-align: center;
    font-size: 16px;
    line-height: 20px;
    color: #c9a0a4;
    background: #f6f5f8;
    border-radius: 8px 0 0 0;
}
```
